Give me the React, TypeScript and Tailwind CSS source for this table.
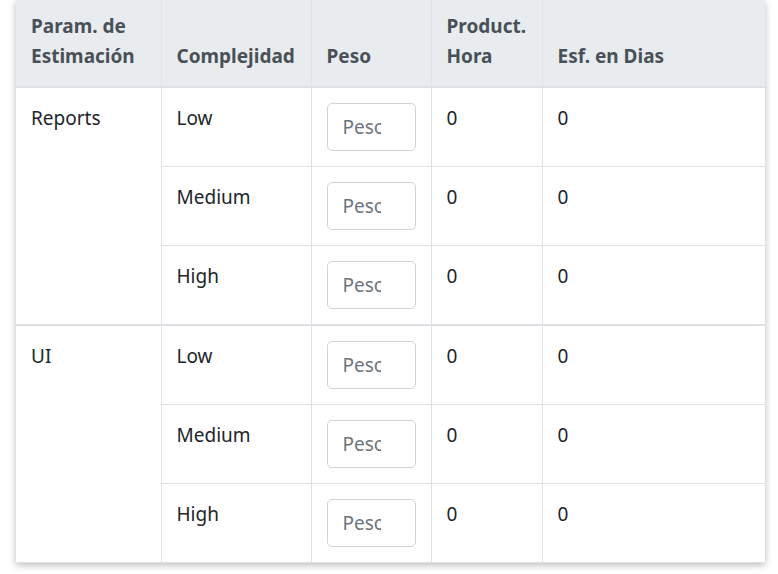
import React from 'react';

type Group = { name: string; rows: { level: string; hours: number; days: number }[] };

const groups: Group[] = [
  {
    name: 'Reports',
    rows: [
      { level: 'Low', hours: 0, days: 0 },
      { level: 'Medium', hours: 0, days: 0 },
      { level: 'High', hours: 0, days: 0 },
    ],
  },
  {
    name: 'UI',
    rows: [
      { level: 'Low', hours: 0, days: 0 },
      { level: 'Medium', hours: 0, days: 0 },
      { level: 'High', hours: 0, days: 0 },
    ],
  },
];

const th = 'align-bottom text-left font-bold text-[#495057] px-[15px] pt-[11px] pb-[15px] border-x border-[#dee2e6]';
const td = 'align-top px-[15px] pt-[15px] pb-[15px] border border-[#dee2e6]';

export default function App() {
  return (
    <div
      className="min-h-[574px] bg-white pl-[16px]"
      style={{ fontFamily: '"Noto Sans", "Open Sans", sans-serif' }}
    >
      <div className="w-[749px] bg-white shadow-[0_2px_7px_rgba(0,0,0,0.28)]">
        <table className="w-full table-fixed border-collapse text-[19px] leading-[30px] text-[#212529]">
          <colgroup>
            <col className="w-[145px]" />
            <col className="w-[150px]" />
            <col className="w-[120px]" />
            <col className="w-[111px]" />
            <col />
          </colgroup>
          <thead className="bg-[#e9ecef]">
            <tr className="border-b-[2px] border-[#dee2e6]">
              <th className={th + ' border-l-0'}>Param. de Estimación</th>
              <th className={th}>Complejidad</th>
              <th className={th}>Peso</th>
              <th className={th}>Product. Hora</th>
              <th className={th + ' border-r-0'}>Esf. en Dias</th>
            </tr>
          </thead>
          {groups.map((g, gi) => (
            <tbody key={g.name} className={gi > 0 ? 'border-t-[2px] border-[#dee2e6]' : ''}>
              {g.rows.map((r, ri) => (
                <tr key={r.level}>
                  {ri === 0 && (
                    <td rowSpan={g.rows.length} className={td + ' border-l-0'}>
                      {g.name}
                    </td>
                  )}
                  <td className={td}>{r.level}</td>
                  <td className={td}>
                    <input
                      type="text"
                      placeholder="Peso"
                      className="block w-[89px] h-[48px] pl-[15px] pr-[34px] py-[7px] border border-[#ced4da] rounded-[5px] text-[19px] text-[#495057] placeholder:text-[#6c757d] outline-none"
                    />
                  </td>
                  <td className={td}>{r.hours}</td>
                  <td className={td + ' border-r-0'}>{r.days}</td>
                </tr>
              ))}
            </tbody>
          ))}
        </table>
      </div>
    </div>
  );
}
